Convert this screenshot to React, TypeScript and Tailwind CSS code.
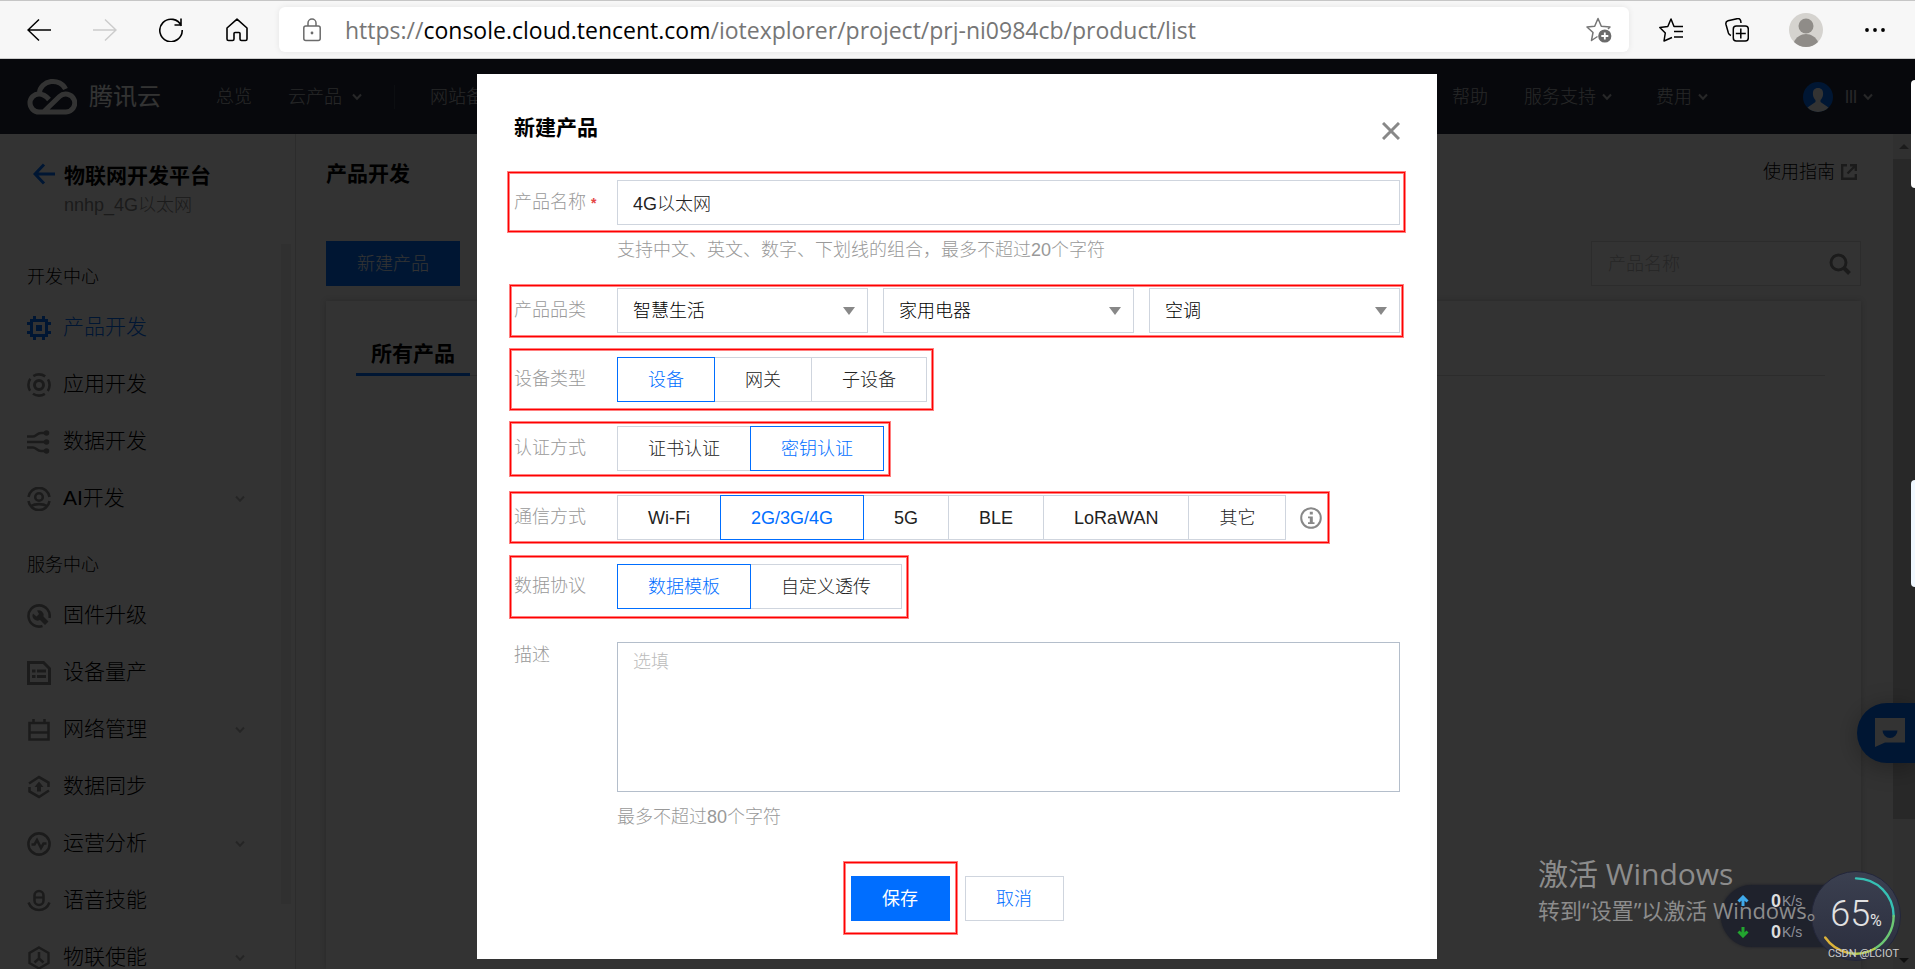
import { useState } from "react";
import type { ReactNode } from "react";

type NavItem = { label: string; icon: ReactNode; active?: boolean; more?: boolean };

const G = (p: { children: ReactNode; className?: string }) => (
  <svg
    viewBox="0 0 24 24"
    fill="none"
    stroke="currentColor"
    strokeWidth="3"
    className={`size-6 shrink-0 ${p.className ?? ""}`}
  >
    {p.children}
  </svg>
);

const devItems: NavItem[] = [
  {
    label: "产品开发",
    active: true,
    icon: (
      <G>
        <path d="M4.5 4.5h15v15h-15z" />
        <path d="M9 9h6v6H9z" fill="currentColor" stroke="none" />
        <path d="M7.5 0v4M16.5 0v4M7.5 20v4M16.5 20v4M0 7.5h4M0 16.5h4M20 7.5h4M20 16.5h4" />
      </G>
    ),
  },
  {
    label: "应用开发",
    icon: (
      <G>
        <circle cx="12" cy="12" r="4.5" />
        <circle cx="12" cy="12" r="10.6" strokeWidth="2.6" strokeDasharray="12.6 4.05" strokeDashoffset="6.3" />
      </G>
    ),
  },
  {
    label: "数据开发",
    icon: (
      <G>
        <path d="M0 6.5h6c3 0 4-3.5 8-3.5h5M0 12h19M0 17.5h6c3 0 4 3.5 8 3.5h5" strokeWidth="2.6" />
        <circle cx="19.5" cy="3" r="2.8" fill="currentColor" stroke="none" />
        <circle cx="19.5" cy="12" r="2.8" fill="currentColor" stroke="none" />
        <circle cx="19.5" cy="21" r="2.8" fill="currentColor" stroke="none" />
      </G>
    ),
  },
  {
    label: "AI开发",
    more: true,
    icon: (
      <G>
        <path d="M1.5 10a10.6 10.6 0 0 1 21 0M1.5 14a10.6 10.6 0 0 0 21 0" strokeWidth="2.6" />
        <circle cx="12" cy="10" r="3.8" strokeWidth="2.6" />
        <path d="M4 19c4-2.5 12-2.5 16 0" strokeWidth="2.6" />
      </G>
    ),
  },
];

const serviceItems: NavItem[] = [
  {
    label: "固件升级",
    icon: (
      <G>
        <path d="M15.5 22a10.6 10.6 0 1 1 7-8" strokeWidth="2.6" />
        <path d="M10 6.5a5 5 0 0 1 6.5 6l5 5-3.5 3.5-5-5A5 5 0 0 1 6 9.5l3.5 3 2.5-2.5z" fill="currentColor" stroke="none" />
      </G>
    ),
  },
  {
    label: "设备量产",
    icon: (
      <G>
        <path d="M1.5 1.5h15l6 6v15h-21z" />
        <path d="M5 10h3.5M10 10h9M5 15.5h3.5M10 15.5h9" />
      </G>
    ),
  },
  {
    label: "网络管理",
    more: true,
    icon: (
      <G>
        <path d="M2.5 5h19v16.500h-19z" strokeWidth="2.6" />
        <path d="M6.5 1V5M17.5 1V5M2.5 14.5h19" strokeWidth="2.6" />
      </G>
    ),
  },
  {
    label: "数据同步",
    icon: (
      <G>
        <path d="M2 8.5 12 2l9.500 5.500V12M22 15.500 12 22l-9.500-5.500V12" strokeWidth="2.6" />
        <path d="M12 6.5 7.5 12H10v4.5h4V12h2.5z" fill="currentColor" stroke="none" />
      </G>
    ),
  },
  {
    label: "运营分析",
    more: true,
    icon: (
      <G>
        <circle cx="12" cy="12" r="10.6" strokeWidth="2.6" />
        <path d="M4.5 12.5h3l2.500-4.500 4 8 2.500-4.500h3" strokeWidth="2.6" />
      </G>
    ),
  },
  {
    label: "语音技能",
    icon: (
      <G>
        <rect x="7.5" y="2" width="9" height="14" rx="4.5" strokeWidth="2.6" />
        <path d="M8 8.5h8" strokeWidth="2.2" />
        <path d="M1.5 13.5c2 5 6 7.500 10.500 7.500s8.500-2.500 10.500-7.500" strokeWidth="2.6" />
      </G>
    ),
  },
  {
    label: "物联使能",
    more: true,
    icon: (
      <G>
        <path d="M12 1.5 21.5 7v10L12 22.5 2.5 17V7z" strokeWidth="2.4" />
        <path d="M12 6v6.500l-4.500 4M12 12.500l4.500 4" strokeWidth="2.6" />
      </G>
    ),
  },
];

const Chevron = ({ className = "" }: { className?: string }) => (
  <svg viewBox="0 0 10 8" fill="none" stroke="currentColor" strokeWidth="2" className={`w-[10px] shrink-0 ${className}`}>
    <path d="M1 1.5 5 5.8 9 1.5" />
  </svg>
);

/** Red frame drawn over a form row. */
const Mark = ({ className }: { className: string }) => (
  <span
    className={`pointer-events-none absolute border border-[#ff0000] shadow-[0_0_0_1px_#ff8080,inset_0_0_0_1px_#ff8080] ${className}`}
  />
);

function BrowserBar() {
  return (
    <div className="flex h-[59px] shrink-0 items-center border-y border-t-[#c6c6c6] border-b-[#cccccc] bg-[#f7f7f7] pl-[27px] pr-[30px] text-black">
      <div className="flex items-center gap-[42px]">
        <button aria-label="后退">
          <svg viewBox="0 0 24 24" fill="none" stroke="currentColor" strokeWidth="1.5" className="size-6">
            <path d="M24 12H1M12 1.5 1 12l11 10.500" />
          </svg>
        </button>
        <button aria-label="前进" className="text-[#cccccc]">
          <svg viewBox="0 0 24 24" fill="none" stroke="currentColor" strokeWidth="1.5" className="size-6">
            <path d="M0 12h23M12 1.5 23 12 12 22.500" />
          </svg>
        </button>
        <button aria-label="刷新">
          <svg viewBox="0 0 24 24" fill="none" stroke="currentColor" strokeWidth="1.6" className="size-6">
            <path d="M22.3 8A11.2 11.2 0 1 0 23.2 12M22 .5V7h-6.500" />
          </svg>
        </button>
        <button aria-label="主页">
          <svg viewBox="0 0 24 24" fill="none" stroke="currentColor" strokeWidth="1.6" strokeLinejoin="round" className="size-6">
            <path d="M2 10 12 1.2 22 10v11a1.5 1.5 0 0 1-1.5 1.5h-4A1.5 1.5 0 0 1 15 21v-5.500a1 1 0 0 0-1-1h-4a1 1 0 0 0-1 1V21a1.5 1.5 0 0 1-1.5 1.5h-4A1.5 1.5 0 0 1 2 21z" />
          </svg>
        </button>
      </div>
      <div className="ml-[30px] flex h-[45px] flex-1 items-center rounded-md bg-white pl-6 pr-[17px] shadow-[0_0_6px_rgba(0,0,0,0.08)]">
        <svg viewBox="0 0 18 24" fill="none" stroke="#6b6b6b" strokeWidth="1.5" className="h-6 w-[18px]">
          <rect x=".8" y="8" width="16.4" height="14.5" rx="2" />
          <path d="M5 8V5a4 4 0 0 1 8 0v3" />
          <circle cx="9" cy="15" r="1.4" fill="#6b6b6b" stroke="none" />
        </svg>
        <p className="ml-6 flex-1 font-['Open_Sans','Noto_Sans',sans-serif] text-[23px] font-normal leading-[30px] text-[#767676]">
          https://<span className="text-black">console.cloud.tencent.com</span>/iotexplorer/project/prj-ni0984cb/product/list
        </p>
        <button aria-label="添加到收藏夹">
          <svg viewBox="0 0 26 26" fill="none" stroke="#767676" strokeWidth="1.5" strokeLinejoin="round" className="size-[26px]">
            <path d="M11.5 19.5 5.5 23.5 7 15.5 1 10l7.700-.8L12 1.5l3.300 7.700 8.700.8-2 2" />
            <circle cx="18.8" cy="19" r="6.6" fill="#6b6b6b" stroke="none" />
            <path d="M18.8 15.5v7M15.3 19h7" stroke="#fff" strokeWidth="1.8" />
          </svg>
        </button>
      </div>
      <div className="ml-[30px] flex items-center">
        <button aria-label="收藏夹">
          <svg viewBox="0 0 24 24" fill="none" stroke="currentColor" strokeWidth="1.5" strokeLinejoin="round" className="size-6">
            <path d="M13 19.5 5 23l1.300-8L.8 9.500l8-1L12 1l3 7.500h1M16 8.500h8M15 13.500h9M15 19h9" />
          </svg>
        </button>
        <button aria-label="集锦" className="ml-[42px]">
          <svg viewBox="0 0 24 24" fill="none" stroke="currentColor" strokeWidth="1.5" className="size-6">
            <rect x="8.3" y="8" width="15" height="15" rx="3" />
            <path d="M15.8 10.5v10M10.8 15.5h10M6 17.5c-1.500-.5-2.200-1.200-2.600-2.500L1 6.5C.5 4.5 1.3 3.2 3 2.7l9-2c2-.5 3.200.3 3.700 2L16 5" />
          </svg>
        </button>
        <button aria-label="个人资料" className="ml-10">
          <svg viewBox="0 0 34 34" className="size-[34px]">
            <circle cx="17" cy="17" r="17" fill="#d5d3cf" />
            <circle cx="17" cy="13" r="7.5" fill="#8f8c88" />
            <path d="M5 29c2-5 7-8 12-8s10 3 12 8a17 17 0 0 1-24 0z" fill="#8f8c88" />
          </svg>
        </button>
        <button aria-label="设置及其他" className="ml-[42px]">
          <svg viewBox="0 0 20 4" className="w-5">
            <circle cx="2" cy="2" r="1.9" />
            <circle cx="10" cy="2" r="1.9" />
            <circle cx="18" cy="2" r="1.9" />
          </svg>
        </button>
      </div>
    </div>
  );
}

function TopNav() {
  return (
    <header className="flex h-[75px] shrink-0 items-center bg-[#242c3c] pl-[27px] pr-[42px] text-lg text-[#c0c2c7]">
      <svg viewBox="0 0 50 37" fill="none" stroke="#fff" strokeWidth="5" className="h-[37px] w-[50px]">
        <path d="M12.5 14.5a13.5 12 0 0 1 26-3.500M22 21.5c-3-3.500-6-5.500-10-5.500a9 9 0 0 0 0 18h27a9 9 0 1 0-6.500-15.500L17 33.5" />
      </svg>
      <span className="ml-3 text-2xl font-normal text-white">腾讯云</span>
      <a href="#" className="ml-[55px]">总览</a>
      <a href="#" className="ml-9 flex items-center gap-[10px]">云产品 <Chevron /></a>
      <span className="ml-8 h-6 w-px bg-[#3f4656]" />
      <a href="#" className="ml-[35px]">网站备案</a>
      <div className="ml-auto flex items-center">
        <a href="#">帮助</a>
        <a href="#" className="ml-9 flex items-center gap-[6px]">服务支持 <Chevron /></a>
        <a href="#" className="ml-11 flex items-center gap-[6px]">费用 <Chevron /></a>
        <svg viewBox="0 0 30 30" className="ml-[95px] size-[30px]">
          <circle cx="15" cy="15" r="15" fill="#006eff" />
          <path d="M15 6c4 0 5.500 3 5 7-.3 2.500-1.500 4-2.500 5v2l8 5.600a15 15 0 0 1-21 0l8-5.600v-2c-1-1-2.200-2.500-2.500-5-.5-4 1-7 5-7z" fill="#fff" />
        </svg>
        <a href="#" className="ml-3 flex items-center gap-[6px]">lll <Chevron /></a>
      </div>
    </header>
  );
}

function NavGroup({ title, items }: { title: string; items: NavItem[] }) {
  return (
    <section>
      <h3 className="leading-[27px] text-black">{title}</h3>
      <ul className="mt-2">
        {items.map((it) => (
          <li key={it.label}>
            <a
              href="#"
              className={`flex h-[57px] items-center gap-3 text-[21px] ${it.active ? "text-[#006eff]" : "text-black"}`}
            >
              <span className={it.active ? "" : "text-[#888888]"}>{it.icon}</span>
              {it.label}
              {it.more && <Chevron className="ml-auto text-[#bbbbbb]" />}
            </a>
          </li>
        ))}
      </ul>
    </section>
  );
}

function Sidebar() {
  return (
    <aside className="flex w-[296px] shrink-0 flex-col border-r border-[#dddddd] bg-white text-lg">
      <div className="flex h-[110px] shrink-0 gap-[9px] pl-[33px] pt-[25px]">
        <a href="#" aria-label="返回" className="pt-1">
          <svg viewBox="0 0 22 22" fill="none" stroke="#006eff" strokeWidth="3" className="size-[22px]">
            <path d="M22 11H2.5M11 1.5 2 11l9 9.500" />
          </svg>
        </a>
        <div>
          <h2 className="text-[21px] font-bold leading-[33px] text-black">物联网开发平台</h2>
          <p className="leading-[27px] text-[#888888]">nnhp_4G以太网</p>
        </div>
      </div>
      <nav className="flex min-h-0 flex-1 overflow-hidden pl-[27px] pr-1">
        <div className="flex flex-1 flex-col gap-[25px] pr-9 pt-5">
          <NavGroup title="开发中心" items={devItems} />
          <NavGroup title="服务中心" items={serviceItems} />
        </div>
        <div className="h-[91%] w-[10px] bg-[#f0f0f0]" />
      </nav>
    </aside>
  );
}

function ProductPage() {
  return (
    <main className="flex min-w-0 flex-1 flex-col bg-[#f7f7f7] text-lg">
      <div className="flex h-[76px] shrink-0 items-center justify-between bg-white pl-[30px] pr-9 pt-1 text-black">
        <h1 className="text-[21px] font-bold">产品开发</h1>
        <a href="#" className="flex items-center gap-[6px] pb-1">
          使用指南
          <svg viewBox="0 0 16 16" fill="none" stroke="#888" strokeWidth="2.4" className="size-4">
            <path d="M6 1.2H1.2v13.600h13.600V10M6.5 9.500l7-7M9 1.2h5.800V7" />
          </svg>
        </a>
      </div>
      <div className="flex min-h-0 flex-1 flex-col pl-[30px] pr-8 pt-[31px]">
        <div className="flex shrink-0 justify-between">
          <button className="h-[45px] bg-[#006eff] px-[31px] text-white">新建产品</button>
          <div className="flex h-[45px] w-[270px] items-center border border-[#dddddd] bg-white pl-4 pr-[9px]">
            <input aria-label="搜索产品" placeholder="产品名称" className="min-w-0 flex-1 outline-none placeholder:text-[#bbbbbb]" />
            <svg viewBox="0 0 22 22" fill="none" stroke="#888" strokeWidth="3" className="size-[22px]">
              <circle cx="9.5" cy="9.5" r="7.5" />
              <path d="m15 15 5.500 5.500" strokeWidth="4" />
            </svg>
          </div>
        </div>
        <div className="mt-[15px] flex-1 bg-white pl-[30px] pr-9 pt-[37px] shadow-[0_0_6px_rgba(0,0,0,0.2)]">
          <div className="flex border-b border-[#dddddd]">
            <a href="#" className="-mb-px border-b-3 border-[#006eff] px-[15px] pb-[3px] text-[21px] font-bold leading-8 text-black">
              所有产品
            </a>
          </div>
        </div>
      </div>
    </main>
  );
}

function PageScrollbar() {
  return (
    <div className="flex w-[22px] shrink-0 flex-col items-center bg-[#f1f1f1] text-[#505050]">
      <svg viewBox="0 0 10 5" fill="#888" className="my-[10px] w-[10px]">
        <path d="M5 0 10 5H0z" />
      </svg>
      <div className="h-[79%] w-full bg-[#c8c8c8]" />
      <svg viewBox="0 0 10 5" fill="currentColor" className="mb-[6px] mt-auto w-[10px]">
        <path d="M0 0h10L5 5z" />
      </svg>
    </div>
  );
}

function Row({ label, mark, children }: { label: string; mark: string; children: ReactNode }) {
  return (
    <div role="group" aria-label={label} className="relative flex w-fit">
      <span className="w-[103px] leading-[45px] text-[#999999]">{label}</span>
      {children}
      <Mark className={mark} />
    </div>
  );
}

function Segment({ options, initial }: { options: string[]; initial: string }) {
  const [value, setValue] = useState(initial);
  return (
    <div className="flex">
      {options.map((o, i) => (
        <button
          key={o}
          type="button"
          aria-pressed={o === value}
          onClick={() => setValue(o)}
          className={`h-[45px] border px-[30px] ${i > 0 ? "-ml-px" : ""} ${
            o === value ? "relative border-[#006eff] text-[#006eff]" : "border-[#cfd5de] text-[#222222]"
          }`}
        >
          {o}
        </button>
      ))}
    </div>
  );
}

function Select({ label, options }: { label: string; options: string[] }) {
  return (
    <div className="relative flex-1">
      <select aria-label={label} className="h-[45px] w-full appearance-none border border-[#cfd5de] bg-white px-[15px] text-black outline-none">
        {options.map((o) => (
          <option key={o}>{o}</option>
        ))}
      </select>
      <svg viewBox="0 0 12 8" fill="#888" className="pointer-events-none absolute right-[13px] top-[19px] w-3">
        <path d="M0 0h12L6 8z" />
      </svg>
    </div>
  );
}

function CreateDialog() {
  return (
    <form
      role="dialog"
      aria-label="新建产品"
      onSubmit={(e) => e.preventDefault()}
      className="w-[960px] bg-white px-[37px] pb-[38px] pt-[37px] text-lg"
    >
      <div className="flex items-start justify-between">
        <h2 className="text-[21px] font-bold leading-[33px] text-black">新建产品</h2>
        <button type="button" aria-label="关闭" className="flex h-[39px] items-center">
          <svg viewBox="0 0 18 18" fill="none" stroke="#888" strokeWidth="3" className="size-[18px]">
            <path d="m1 1 16 16M17 1 1 17" />
          </svg>
        </button>
      </div>

      <div className="mt-[30px] flex flex-col gap-6">
        <div>
          <div className="relative flex">
            <label htmlFor="name" className="w-[103px] leading-[45px] text-[#999999]">
              产品名称<span className="ml-[5px] text-sm font-bold text-[#e54545]">*</span>
            </label>
            <input
              id="name"
              defaultValue="4G以太网"
              className="h-[45px] flex-1 border border-[#cfd5de] px-[15px] pb-[2px] text-[#222222] outline-none"
            />
            <Mark className="-bottom-[7px] -left-[6px] -right-[5px] -top-2" />
          </div>
          <p className="ml-[103px] mt-3 leading-[27px] text-[#999999]">
            支持中文、英文、数字、下划线的组合，最多不超过20个字符
          </p>
        </div>

        <div className="relative flex">
          <span className="w-[103px] leading-[45px] text-[#999999]">产品品类</span>
          <div className="flex flex-1 gap-[15px]">
            <Select label="一级品类" options={["智慧生活"]} />
            <Select label="二级品类" options={["家用电器"]} />
            <Select label="三级品类" options={["空调"]} />
          </div>
          <Mark className="-bottom-1 -left-1 -right-[3px] -top-[3px]" />
        </div>

        <Row label="设备类型" mark="-bottom-2 -left-1 -right-[6px] -top-2">
          <Segment options={["设备", "网关", "子设备"]} initial="设备" />
        </Row>
        <Row label="认证方式" mark="-bottom-[5px] -left-1 -right-[6px] -top-1">
          <Segment options={["证书认证", "密钥认证"]} initial="密钥认证" />
        </Row>
        <Row label="通信方式" mark="-bottom-[3px] -left-1 -right-[7px] -top-[3px]">
          <Segment options={["Wi-Fi", "2G/3G/4G", "5G", "BLE", "LoRaWAN", "其它"]} initial="2G/3G/4G" />
          <svg viewBox="0 0 22 22" fill="none" stroke="#888" strokeWidth="2" className="ml-[14px] size-[22px] self-center">
            <circle cx="11" cy="11" r="9.8" />
            <path d="M9.8 4.8h3v2.700h-3zM8 9.500h4.800v5.700h1.700V17H8v-1.800h1.800v-3.900H8z" fill="#888" stroke="none" />
          </svg>
        </Row>
        <Row label="数据协议" mark="-bottom-[9px] -left-1 -right-[6px] -top-2">
          <Segment options={["数据模板", "自定义透传"]} initial="数据模板" />
        </Row>

        <div className="flex">
          <label htmlFor="desc" className="w-[103px] leading-[45px] text-[#999999]">描述</label>
          <div className="flex flex-1 flex-col pt-[9px]">
            <textarea
              id="desc"
              placeholder="选填"
              className="h-[150px] resize-none border border-[#b4becb] px-[15px] py-[6px] leading-[27px] outline-none placeholder:text-[#bbbbbb]"
            />
            <p className="mt-3 leading-[27px] text-[#999999]">最多不超过80个字符</p>
          </div>
        </div>
      </div>

      <div className="mt-[45px] flex justify-center gap-[15px]">
        <div className="relative">
          <button type="submit" className="h-[45px] w-[99px] bg-[#006eff] font-normal text-white">保存</button>
          <Mark className="-bottom-[13px] -left-[7px] -right-[7px] -top-[14px]" />
        </div>
        <button type="button" className="h-[45px] w-[99px] border border-[#cfd5de] text-[#006eff]">取消</button>
      </div>
    </form>
  );
}

/** Desktop widget: network speed and memory load. */
function SpeedBall() {
  return (
    <div className="absolute bottom-2 right-[14px] flex h-[90px] items-center">
      <div className="-mr-[22px] flex h-[62px] w-[112px] flex-col justify-center rounded-l-full bg-[#1f222c] pl-4 text-sm font-normal text-[#8d9099] shadow-[0_0_3px_#1a1c26]">
        {["#3fa9ea", "#22a52f"].map((c, i) => (
          <div key={c} className="flex h-8 items-center">
            <svg viewBox="0 0 12 12" fill="none" stroke={c} strokeWidth="3" className="w-3">
              <path d={i === 0 ? "M6 11V2.5M1.5 6.5 6 2l4.500 4.500" : "M6 1v8.500M1.5 5.500 6 10l4.500-4.500"} />
            </svg>
            <span className="ml-[22px] text-lg font-bold text-[#dddddd]">0</span>
            <span className="ml-px">K/s</span>
          </div>
        ))}
      </div>
      <div className="relative flex size-[90px] items-center justify-center rounded-full border border-[#23263a] bg-linear-to-b from-[#3b4050] to-[#2b2e3e]">
        <svg viewBox="0 0 90 90" fill="none" strokeWidth="2.5" strokeLinecap="round" className="absolute inset-0">
          <path d="M45 6.5A38.5 38.5 0 0 1 83.5 45" stroke="#36c0b4" />
          <path d="M83.5 45A38.5 38.5 0 0 1 64 78.5" stroke="#6cc774" />
          <path d="M64 78.5A38.5 38.5 0 0 1 36 82.4" stroke="#b3cc4c" />
          <path d="M36 82.4A38.5 38.5 0 0 1 13.5 67" stroke="#dcb33a" />
        </svg>
        <span className="flex items-baseline pb-1 font-['Roboto','Open_Sans',sans-serif] text-[36px] font-light leading-none text-[#e2e2e2]">
          65<small className="text-base font-normal">%</small>
        </span>
      </div>
    </div>
  );
}

export default function App() {
  return (
    <div className="flex h-screen flex-col overflow-hidden font-['Liberation_Sans','Noto_Sans_CJK_SC',sans-serif] font-light">
      <BrowserBar />
      <div className="relative flex min-h-0 flex-1 flex-col">
        <TopNav />
        <div className="flex min-h-0 flex-1">
          <Sidebar />
          <ProductPage />
          <PageScrollbar />
        </div>
        <button
          aria-label="在线客服"
          className="absolute right-0 top-[644px] h-[60px] w-[58px] rounded-l-full bg-[#006eff] pl-[18px] shadow-[0_4px_24px_rgba(0,0,0,0.3)]"
        >
          <svg viewBox="0 0 30 30" className="w-[30px]">
            <path d="M0 0h30v24.500H10L0 29z" fill="#fff" />
            <path d="M7.5 12.5h15a7.5 7.5 0 0 1-15 0z" fill="#006eff" />
          </svg>
        </button>

        {/* mask + dialog */}
        <div className="absolute inset-0 flex items-start justify-center bg-black/80 pr-px pt-[15px]">
          <CreateDialog />
        </div>

        {/* edge tabs, desktop widget, watermarks */}
        <span className="absolute right-0 top-[21px] h-[108px] w-1 rounded-l-sm bg-white" />
        <span className="absolute right-0 top-[421px] h-[107px] w-1 rounded-l-sm bg-[#f0f8ff]" />
        <SpeedBall />
        <div className="pointer-events-none absolute bottom-[41px] right-[94px] w-[283px] whitespace-nowrap font-['Open_Sans','Noto_Sans_CJK_SC',sans-serif] font-normal text-[#8c8c8c]">
          <p className="text-[30px] leading-9">激活 Windows</p>
          <p className="text-[22px] leading-9">转到“设置”以激活 Windows。</p>
        </div>
        <p className="pointer-events-none absolute bottom-[7px] right-4 font-['Roboto',sans-serif] text-[11px] font-normal leading-4 text-[#cccccc]">
          CSDN @LCIOT
        </p>
      </div>
    </div>
  );
}
